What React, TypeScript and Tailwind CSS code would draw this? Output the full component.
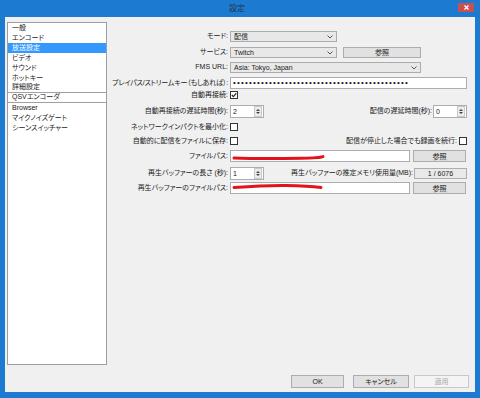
import React from 'react';

// 設定ダイアログ (放送設定)
const menu = [
	{ label: '一般' },
	{ label: 'エンコード' },
	{ label: '放送設定', active: true },
	{ label: 'ビデオ' },
	{ label: 'サウンド' },
	{ label: 'ホットキー' },
	{ label: '詳細設定', line: true },
	{ label: 'QSVエンコーダ', line: true },
	{ label: 'Browser' },
	{ label: 'マイクノイズゲート' },
	{ label: 'シーンスイッチャー' },
];

function Label({ text, className = '' }: { text: string; className?: string }) {
	return <div className={`w-[121px] mr-[2px] shrink-0 text-right whitespace-nowrap ${className}`}>{text}</div>;
}

function Arrow() {
	return (
		<svg width="6" height="4" viewBox="0 0 6 4" className="shrink-0">
			<path d="M0.5 0.5 L3 3 L5.5 0.5" fill="none" stroke="#555" strokeWidth="1" />
		</svg>
	);
}

function Combo({ text, w }: { text: string; w: string }) {
	return (
		<div className={`${w} h-[11px] flex items-center justify-between pl-[3px] pr-[3px] bg-[#e8e8e8] border border-[#acacac]`}>
			<span className="whitespace-nowrap leading-none">{text}</span>
			<Arrow />
		</div>
	);
}

function Btn({ text, w, h = 'h-[12px]', className = '' }: { text: string; w: string; h?: string; className?: string }) {
	return (
		<div className={`${w} ${h} flex items-center justify-center bg-[#e1e1e1] border border-[#adadad] leading-none ${className}`}>
			{text}
		</div>
	);
}

function Spin({ value }: { value: string }) {
	return (
		<div className="w-[34px] h-[13px] flex items-center bg-white border border-[#abadb3] pl-[2px]">
			<span className="flex-1 leading-none">{value}</span>
			<div className="w-[8px] h-[11px] mr-[1px] flex flex-col items-center justify-center gap-[1px] bg-[#ececec] border border-[#c9c9c9]">
				<svg width="4" height="2" viewBox="0 0 4 2"><path d="M0 2 L2 0 L4 2Z" fill="#444" /></svg>
				<svg width="4" height="2" viewBox="0 0 4 2"><path d="M0 0 L2 2 L4 0Z" fill="#444" /></svg>
			</div>
		</div>
	);
}

function Check({ checked = false }: { checked?: boolean }) {
	return (
		<div className="w-[8px] h-[8px] bg-white border border-[#333] flex items-center justify-center">
			{checked && (
				<svg width="6" height="6" viewBox="0 0 6 6">
					<path d="M0.8 3 L2.4 4.6 L5.3 1.2" fill="none" stroke="#222" strokeWidth="1.1" />
				</svg>
			)}
		</div>
	);
}

function PathBox({ d }: { d: string }) {
	return (
		<div className="relative w-[180px] h-[12px] bg-white border border-[#abadb3]">
			<svg width="180" height="12" viewBox="0 0 180 12" className="absolute left-0 top-0">
				<path d={d} fill="none" stroke="#e3121b" strokeWidth="3" strokeLinecap="round" />
			</svg>
		</div>
	);
}

export default function App() {
	return (
		<div className="w-[480px] h-[398px] bg-[#1c7bd0] flex flex-col text-[7px] text-[#1a1a1a] font-['Liberation_Sans','Noto_Sans_CJK_JP',sans-serif] [font-feature-settings:'palt']">
			{/* タイトルバー */}
			<div className="h-[17px] flex items-center">
				<div className="flex-1" />
				<div className="text-[8px] text-[#23364f]">設定</div>
				<div className="flex-1 flex justify-end pr-[6px]">
					<div className="w-[16px] h-[9px] -mt-[2px] bg-[#c75050] flex items-center justify-center">
						<svg width="5" height="5" viewBox="0 0 5 5">
							<path d="M0.5 0.5 L4.5 4.5 M4.5 0.5 L0.5 4.5" stroke="#fff" strokeWidth="1.2" />
						</svg>
					</div>
				</div>
			</div>
			{/* クライアント */}
			<div className="mx-[5px] h-[375px] bg-[#f0f0f0] flex flex-col">
				<div className="flex pt-[5px]">
					{/* メニュー */}
					<div className="ml-[2px] w-[100px] h-[343px] shrink-0 bg-white border border-[#9a9fa6]">
						{menu.map((m) => (
							<div
								key={m.label}
								className={`h-[10px] pl-[4px] flex items-center whitespace-nowrap ${m.active ? 'bg-[#3399ff] text-white' : ''} ${m.line ? 'border-b border-[#a0a0a0]' : ''}`}
							>
								{m.label}
							</div>
						))}
					</div>
					{/* 放送設定 */}
					<div className="flex-1 flex flex-col pt-[9px] pr-[8px]">
						<div className="h-[11px] flex items-center">
							<Label text="モード:" />
							<Combo text="配信" w="w-[107px]" />
						</div>
						<div className="h-[11px] mt-[5px] flex items-center">
							<Label text="サービス:" />
							<Combo text="Twitch" w="w-[107px]" />
							<Btn text="参照" w="w-[78px] ml-[6px]" h="h-[11px]" />
						</div>
						<div className="h-[11px] mt-[4px] flex items-center">
							<Label text="FMS URL:" />
							<Combo text="Asia: Tokyo, Japan" w="w-[191px]" />
						</div>
						<div className="h-[12px] mt-[4px] flex items-center">
							<Label text="プレイパス/ストリームキー（もしあれば）:" className="tracking-[-0.2px]" />
							<div className="flex-1 h-[12px] flex items-center bg-white border border-[#abadb3] pl-[2px] overflow-hidden">
								<span className="text-[8px] tracking-[1.2px] leading-none whitespace-nowrap">
									{'•'.repeat(44)}
								</span>
							</div>
						</div>
						<div className="h-[10px] mt-[1px] flex items-center">
							<Label text="自動再接続:" />
							<Check checked />
						</div>
						<div className="h-[13px] mt-[5px] flex items-center">
							<Label text="自動再接続の遅延時間(秒):" />
							<Spin value="2" />
							<div className="flex-1 text-right whitespace-nowrap mr-[1px]">配信の遅延時間(秒):</div>
							<Spin value="0" />
						</div>
						<div className="h-[10px] mt-[4px] flex items-center">
							<Label text="ネットワークインパクトを最小化:" />
							<Check />
						</div>
						<div className="h-[10px] mt-[4px] flex items-center">
							<Label text="自動的に配信をファイルに保存:" />
							<Check />
							<div className="flex-1 text-right whitespace-nowrap mr-[2px]">配信が停止した場合でも録画を続行:</div>
							<Check />
						</div>
						<div className="h-[12px] mt-[4px] flex items-center">
							<Label text="ファイルパス:" />
							<PathBox d="M3 7 C25 7.8 50 7.6 70 7.2 C82 7 90 6.4 92 5.6" />
							<Btn text="参照" w="w-[53px] ml-[3px]" />
						</div>
						<div className="h-[12px] mt-[5px] flex items-center">
							<Label text="再生バッファーの長さ (秒):" />
							<Spin value="1" />
							<div className="flex-1 text-right whitespace-nowrap mr-[1px]">再生バッファーの推定メモリ使用量(MB):</div>
							<Btn text="1 / 6076" w="w-[53px]" h="h-[11px]" className="bg-[#e9e9e9]" />
						</div>
						<div className="h-[12px] mt-[3px] flex items-center">
							<Label text="再生バッファーのファイルパス:" />
							<PathBox d="M3 4.5 C20 3.2 38 2.2 55 2.4 C72 2.6 84 3.6 90 4.4" />
							<Btn text="参照" w="w-[53px] ml-[3px]" />
						</div>
					</div>
				</div>
				{/* ボタン */}
				<div className="mt-[10px] flex justify-end pr-[6px]">
					<Btn text="OK" w="w-[53px]" h="h-[13px]" className="border-[#3c8fdc]" />
					<Btn text="キャンセル" w="w-[56px] ml-[9px]" h="h-[13px]" />
					<Btn text="適用" w="w-[55px] ml-[5px]" h="h-[13px]" className="bg-[#f4f4f4] border-[#c8c8c8] text-[#a8a8a8]" />
				</div>
			</div>
		</div>
	);
}
